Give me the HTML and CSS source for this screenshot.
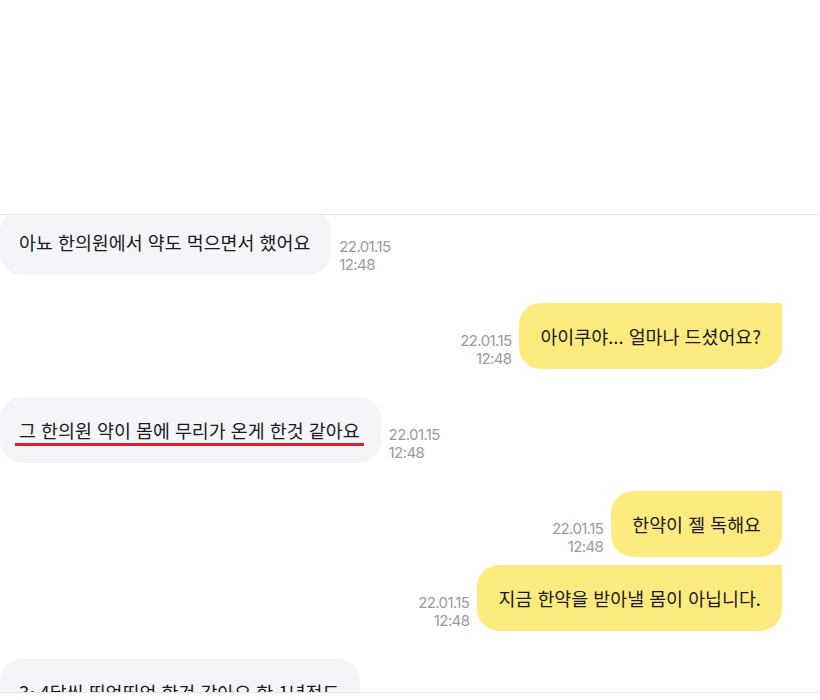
FILE: index.html
```html
<!DOCTYPE html>
<html lang="ko">
  <head>
    <meta charset="UTF-8" />
    <meta name="viewport" content="width=device-width, initial-scale=1.0" />
    <title>상담 내역</title>
    <link rel="stylesheet" href="styles.css">
  </head>
  <body>
    <div class="top-space"></div>

    <div class="chat">
      <div class="chat-list">
        <div class="msg msg-in">
          <div class="bubble">아뇨 한의원에서 약도 먹으면서 했어요</div>
          <div class="time">22.01.15<br />12:48</div>
        </div>

        <div class="msg msg-out group-gap">
          <div class="time">22.01.15<br />12:48</div>
          <div class="bubble">아이쿠야... 얼마나 드셨어요?</div>
        </div>

        <div class="msg msg-in group-gap">
          <div class="bubble"><span class="mark">그 한의원 약이 몸에 무리가 온게 한것 같아요</span></div>
          <div class="time">22.01.15<br />12:48</div>
        </div>

        <div class="msg msg-out group-gap">
          <div class="time">22.01.15<br />12:48</div>
          <div class="bubble">한약이 젤 독해요</div>
        </div>

        <div class="msg msg-out">
          <div class="time">22.01.15<br />12:48</div>
          <div class="bubble">지금 한약을 받아낼 몸이 아닙니다.</div>
        </div>

        <div class="msg msg-in group-gap">
          <div class="bubble">3~4달씩 띄엄띄엄 한것 같아요 한 1년정도<br />먹었던 것 같아요</div>
          <div class="time">22.01.15<br />12:48</div>
        </div>
      </div>
    </div>
  </body>
</html>
```

FILE: styles.css
```css
body {
  margin: 0;
  background-color: #fff;
  font-family: "Noto Sans CJK KR", "Noto Sans", sans-serif;
  color: #1a1a1a;
}

.top-space {
  height: 214px;
}

.chat {
  height: 477px;
  border-top: 1px solid #e6e6e8;
  border-bottom: 1px solid #e6e6e8;
  overflow: hidden;
}

/* list is scrolled a little, so the first bubble is cut at the top */
.chat-list {
  display: flex;
  flex-direction: column;
  gap: 8px;
  margin-top: -6px;
  padding-right: 38px;
}

.msg {
  display: flex;
  align-items: flex-end;
  gap: 8px;
}

.msg-out {
  justify-content: flex-end;
}

.group-gap {
  margin-top: 20px;
}

.bubble {
  font-size: 18.4px;
  line-height: 26px;
  padding: 20px 21px;
  border-radius: 22px;
  white-space: nowrap;
}

.msg-in .bubble {
  background-color: #f4f5f8;
  padding-left: 19px;
}

.msg-out .bubble {
  background-color: #fdeb80;
  border-top-right-radius: 0;
}

.time {
  font-family: "Inter", "Liberation Sans", sans-serif;
  font-size: 15px;
  line-height: 18px;
  letter-spacing: -0.6px;
  color: #9a9aa2;
  margin-bottom: 1px;
}

.msg-out .time {
  text-align: right;
}

.mark {
  display: inline-block;
  padding: 0 4px 1px;
  margin: 0 -4px -4px;
  border-bottom: 3px solid #d7252b;
  line-height: 24px;
}
```
